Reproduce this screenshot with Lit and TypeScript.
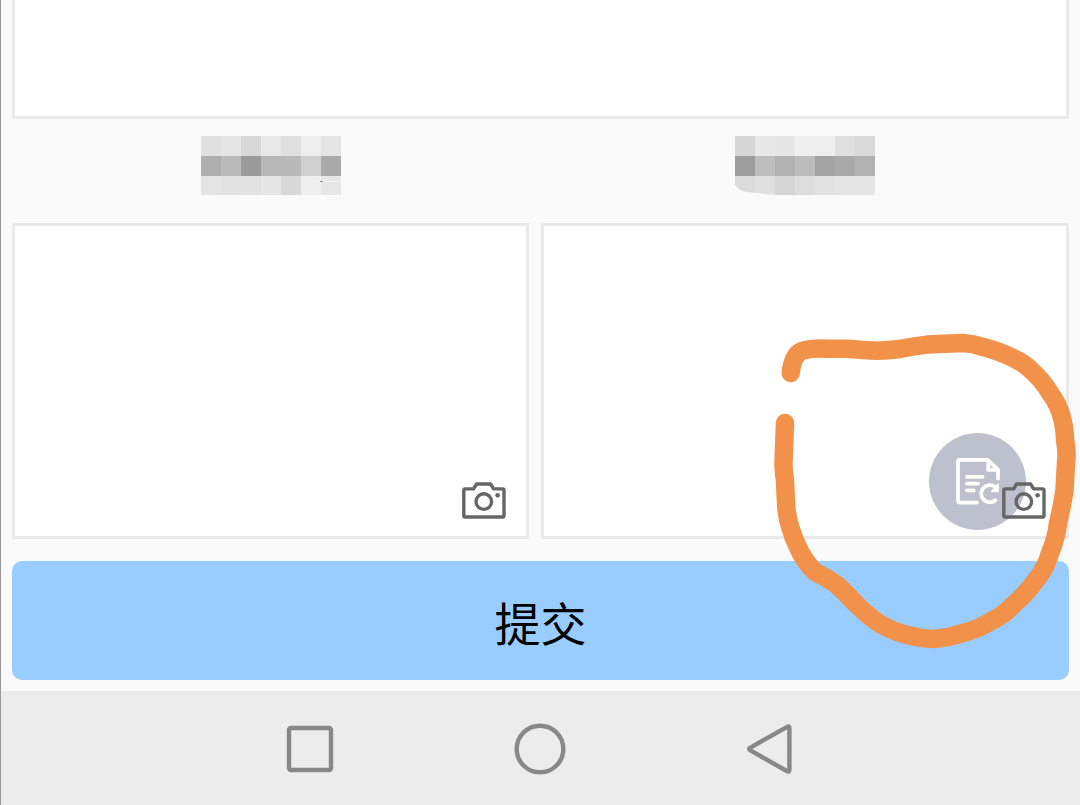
import { LitElement, html, css, svg } from "lit";
import { customElement, property } from "lit/decorators.js";

/** Pixelated block that hides a field's caption. */
@customElement("masked-label")
class MaskedLabel extends LitElement {
  @property({ attribute: false }) rows: string[][] = [];
  @property({ type: Boolean }) worn = false;
  @property({ type: Boolean }) speck = false;

  static styles = css`
    :host { display: block; height: 60px; }
    .mosaic { display: block; width: 140px; height: 60px; }
  `;

  render() {
    const shape = this.worn
      ? "M0 0H140V59H42L20 57Q4 56 0 49Z"
      : "M0 0H140V59H0Z";
    return html`<svg class="mosaic" viewBox="0 0 140 60" aria-hidden="true" shape-rendering="crispEdges">
      <defs><clipPath id="edge"><path d=${shape} /></clipPath></defs>
      <g clip-path="url(#edge)">
        ${this.rows.map((row, y) =>
          row.map((c, x) => svg`<rect x=${x * 20} y=${y * 20} width="20" height="20" fill=${c} />`)
        )}
        ${this.speck ? svg`<path d="M112 45H140V46H112Z" fill="#f2f2f2" /><path d="M119 45H122V46H119Z" fill="#888" />` : ""}
      </g>
    </svg>`;
  }
}

@customElement("photo-box")
class PhotoBox extends LitElement {
  @property() label = "";

  static styles = css`
    :host {
      display: flex;
      position: relative;
      box-sizing: border-box;
      justify-content: flex-end;
      align-items: flex-end;
      min-height: 316px;
      padding: 17px 20px;
      border: 3px solid #eaeaea;
      background: #fff;
    }
    .camera {
      position: relative;
      z-index: 2;
      display: block;
      padding: 0;
      border: 0;
      background: none;
      cursor: pointer;
    }
    .glyph { display: block; width: 44px; height: 37px; }
  `;

  render() {
    return html`
      <slot></slot>
      <button class="camera" type="button" aria-label=${this.label}>
        <svg class="glyph" viewBox="0 0 44 37" fill="none" stroke="#666" stroke-width="3.4" stroke-linejoin="round">
          <path d="M3.3 6.9H11.6L14.6 2H28.6L31.6 6.9H40.5Q42 6.9 42 8.4V33.5Q42 35 40.5 35H3.3Q1.8 35 1.8 33.5V8.4Q1.8 6.9 3.3 6.9Z" />
          <circle cx="21.8" cy="19.6" r="7.8" />
          <circle cx="35.6" cy="13.2" r="2.3" fill="#666" stroke="none" />
        </svg>
      </button>
    `;
  }
}

@customElement("app-root")
class AppRoot extends LitElement {
  static styles = css`
    :host {
      display: flex;
      flex-direction: column;
      position: relative;
      box-sizing: border-box;
      min-height: 100vh;
      overflow: hidden;
      border-left: 1px solid #999;
      background: #fafafa;
      font-family: "Noto Sans CJK SC", sans-serif;
    }
    .form {
      display: flex;
      flex-direction: column;
      padding: 0 11px 11px;
    }
    .panel {
      box-sizing: border-box;
      min-height: 119px;
      border: 3px solid #eaeaea;
      border-top: 0;
      background: #fff;
    }
    .photos {
      display: grid;
      grid-template-columns: 517fr 528fr;
      column-gap: 12px;
      margin-bottom: 22px;
    }
    .caption {
      display: flex;
      justify-content: center;
      padding: 17px 0 27px;
    }
    .submit {
      height: 119px;
      padding: 0;
      border: 0;
      border-radius: 10px;
      background: #99ccff;
      color: #000;
      font-family: inherit;
      font-size: 46px;
      line-height: 64px;
      cursor: pointer;
    }
    .float {
      position: absolute;
      right: 40px;
      bottom: 6px;
      z-index: 1;
      width: 97px;
      height: 97px;
      padding: 0;
      border: 0;
      border-radius: 50%;
      background: #bcc1cd;
      cursor: pointer;
    }
    .float-glyph { display: block; width: 97px; height: 97px; }
    .nav {
      display: flex;
      flex: 1;
      box-sizing: border-box;
      justify-content: center;
      align-items: center;
      min-height: 114px;
      padding: 2px 2px 0 0;
      background: #ececec;
    }
    .key {
      display: flex;
      justify-content: center;
      width: 230px;
      padding: 0;
      border: 0;
      background: none;
      cursor: pointer;
    }
    .key-glyph { display: block; width: 52px; height: 52px; }
    .marker {
      position: absolute;
      top: 320px;
      right: 0;
      z-index: 3;
      width: 320px;
      height: 340px;
      pointer-events: none;
    }
  `;

  private left = [
    ["#e0e0e0", "#e5e5e5", "#d8d8d8", "#e9e9e9", "#dfdfdf", "#eeeeee", "#e4e4e4"],
    ["#afafaf", "#bbbbbb", "#9b9b9b", "#b7b7b7", "#b9b9b9", "#d0d0d0", "#aaaaaa"],
    ["#e4e4e4", "#e1e1e1", "#e2e2e2", "#e6e6e6", "#d8d8d8", "#efefef", "#e7e7e7"],
  ];

  private right = [
    ["#d6d6d6", "#e8e8e8", "#e6e6e6", "#efefef", "#eeeeee", "#e0e0e0", "#dadada"],
    ["#9e9e9e", "#bebebe", "#b1b1b1", "#bcbcbc", "#a3a3a3", "#a9a9a9", "#b1b1b1"],
    ["#dbdbdb", "#e0e0e0", "#d5d5d5", "#dddddd", "#e1e1e1", "#e4e4e4", "#e4e4e4"],
  ];

  private key(label: string, shape: unknown) {
    return html`<button class="key" type="button" aria-label=${label}>
      <svg class="key-glyph" viewBox="0 0 52 52" fill="none" stroke="#888" stroke-width="4.4" stroke-linejoin="round">${shape}</svg>
    </button>`;
  }

  render() {
    return html`
      <main class="form">
        <section class="panel"></section>
        <section class="photos">
          <div class="caption"><masked-label .rows=${this.left} speck></masked-label></div>
          <div class="caption"><masked-label .rows=${this.right} worn></masked-label></div>
          <photo-box label="拍照"></photo-box>
          <photo-box label="拍照">
            <button class="float" type="button" aria-label="刷新记录">
              <svg class="float-glyph" viewBox="0 0 97 97" fill="none" stroke="#fff" stroke-width="3.8" stroke-linecap="round" stroke-linejoin="round">
                <path d="M48 69.6H31Q29 69.6 29 67.6V28.8Q29 26.8 31 26.8H58.6L69 36.6V45.6" />
                <path d="M59.2 28V36.8H68.4" />
                <path d="M38 43.8H53.6M38 50.6H49M38 57.4H44.8" />
                <path d="M66.4 67.2A8.6 8.6 0 1 1 66.2 54" />
                <path d="M69 51.4V58.2H63Z" fill="#fff" stroke-width="2" />
              </svg>
            </button>
          </photo-box>
        </section>
        <button class="submit" type="button">提交</button>
      </main>
      <nav class="nav">
        ${this.key("最近任务", svg`<rect x="5" y="5" width="42" height="42" rx="2" />`)}
        ${this.key("主屏幕", svg`<circle cx="26" cy="26" r="23.3" />`)}
        ${this.key("返回", svg`<path d="M43.2 3.8Q45.4 2.6 45.4 5V47Q45.4 49.4 43.2 48.2L6 27.2Q4.4 26 6 24.8Z" />`)}
      </nav>
      <svg class="marker" viewBox="760 320 320 340" fill="none" stroke="#f29149" stroke-width="18.5" stroke-linecap="round" stroke-linejoin="round" aria-hidden="true">
        <path d="M790.7 373Q793 352 805 350Q814 348 827 348.7L847 348.7Q863 350 877 350.7Q889 350.5 900 349Q913 346 927 344.6Q945 343.5 963 343Q973 343.5 983 347Q999 351 1013 358Q1024 363 1032 371Q1043 381 1050 393Q1059 405 1062 418Q1065 430 1065 440Q1067.5 452 1066 463L1064.5 490Q1062 507 1058 523Q1056 540 1050 553Q1046 568 1036 580Q1026 594 1013 605Q1004 615 993 620Q979 629 963 633Q948 638 933 639Q920 638.5 907 635Q891 631 877 622Q866 614 857 605Q847 594 837 585Q824 576 815 572Q803 560 797 545Q789 528 786.5 510Q785.5 495 785 480Q783 470 783.6 460L785 423" />
      </svg>
    `;
  }
}
